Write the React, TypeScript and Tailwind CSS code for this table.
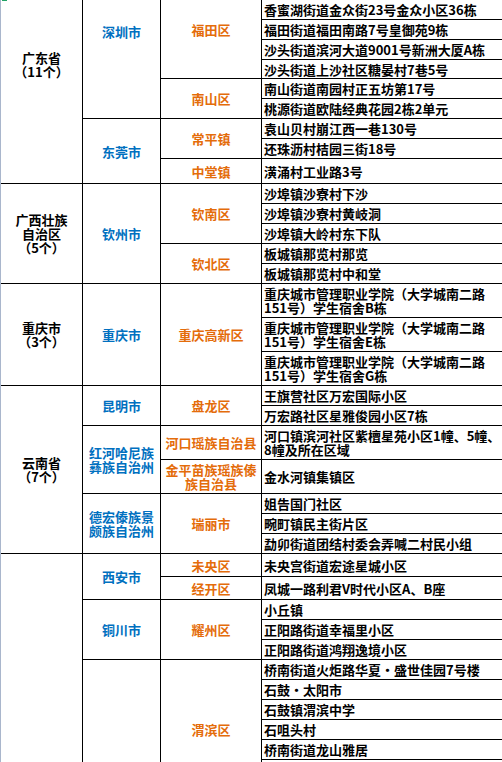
type Addr = { h: string; t: string[] };
type District = { name: string[]; rows: Addr[] };
type City = { name: string[]; districts: District[] };
type Province = { name: string[]; cities: City[] };

// rows above the top edge are cut off in the screenshot, kept so the merged cells centre the same way
const provinces: Province[] = [
  {
    name: ['广东省', '（11个）'],
    cities: [
      {
        name: ['深圳市'],
        districts: [
          { name: [], rows: [{ h: 'h-[35px]', t: [] }] },
          {
            name: ['福田区'],
            rows: [
              { h: 'h-[20px]', t: [] },
              { h: 'h-[20px]', t: ['香蜜湖街道金众街23号金众小区36栋'] },
              { h: 'h-[20px]', t: ['福田街道福田南路7号皇御苑9栋'] },
              { h: 'h-[20px]', t: ['沙头街道滨河大道9001号新洲大厦A栋'] },
              { h: 'h-[19px]', t: ['沙头街道上沙社区糖晏村7巷5号'] },
            ],
          },
          {
            name: ['南山区'],
            rows: [
              { h: 'h-[20px]', t: ['南山街道南园村正五坊第17号'] },
              { h: 'h-[20px]', t: ['桃源街道欧陆经典花园2栋2单元'] },
            ],
          },
        ],
      },
      {
        name: ['东莞市'],
        districts: [
          {
            name: ['常平镇'],
            rows: [
              { h: 'h-[20px]', t: ['袁山贝村崩江西一巷130号'] },
              { h: 'h-[20px]', t: ['还珠沥村桔园三街18号'] },
            ],
          },
          { name: ['中堂镇'], rows: [{ h: 'h-[25px]', t: ['潢涌村工业路3号'] }] },
        ],
      },
    ],
  },
  {
    name: ['广西壮族', '自治区', '（5个）'],
    cities: [
      {
        name: ['钦州市'],
        districts: [
          {
            name: ['钦南区'],
            rows: [
              { h: 'h-[20px]', t: ['沙埠镇沙寮村下沙'] },
              { h: 'h-[20px]', t: ['沙埠镇沙寮村黄岐洞'] },
              { h: 'h-[20px]', t: ['沙埠镇大岭村东下队'] },
            ],
          },
          {
            name: ['钦北区'],
            rows: [
              { h: 'h-[20px]', t: ['板城镇那览村那览'] },
              { h: 'h-[20px]', t: ['板城镇那览村中和堂'] },
            ],
          },
        ],
      },
    ],
  },
  {
    name: ['重庆市', '（3个）'],
    cities: [
      {
        name: ['重庆市'],
        districts: [
          {
            name: ['重庆高新区'],
            rows: [
              { h: 'h-[34px]', t: ['重庆城市管理职业学院（大学城南二路', '151号）学生宿舍B栋'] },
              { h: 'h-[34px]', t: ['重庆城市管理职业学院（大学城南二路', '151号）学生宿舍E栋'] },
              { h: 'h-[34px]', t: ['重庆城市管理职业学院（大学城南二路', '151号）学生宿舍G栋'] },
            ],
          },
        ],
      },
    ],
  },
  {
    name: ['云南省', '（7个）'],
    cities: [
      {
        name: ['昆明市'],
        districts: [
          {
            name: ['盘龙区'],
            rows: [
              { h: 'h-[20px]', t: ['王旗营社区万宏国际小区'] },
              { h: 'h-[20px]', t: ['万宏路社区星雅俊园小区7栋'] },
            ],
          },
        ],
      },
      {
        name: ['红河哈尼族', '彝族自治州'],
        districts: [
          {
            name: ['河口瑶族自治县'],
            rows: [{ h: 'h-[34px]', t: ['河口镇滨河社区紫檀星苑小区1幢、5幢、', '8幢及所在区域'] }],
          },
          {
            name: ['金平苗族瑶族傣', '族自治县'],
            rows: [{ h: 'h-[34px]', t: ['金水河镇集镇区'] }],
          },
        ],
      },
      {
        name: ['德宏傣族景', '颇族自治州'],
        districts: [
          {
            name: ['瑞丽市'],
            rows: [
              { h: 'h-[20px]', t: ['姐告国门社区'] },
              { h: 'h-[20px]', t: ['畹町镇民主街片区'] },
              { h: 'h-[20px]', t: ['勐卯街道团结村委会弄喊二村民小组'] },
            ],
          },
        ],
      },
    ],
  },
  {
    name: [],
    cities: [
      {
        name: ['西安市'],
        districts: [
          { name: ['未央区'], rows: [{ h: 'h-[23px]', t: ['未央宫街道宏途星城小区'] }] },
          { name: ['经开区'], rows: [{ h: 'h-[23px]', t: ['凤城一路利君V时代小区A、B座'] }] },
        ],
      },
      {
        name: ['铜川市'],
        districts: [
          {
            name: ['耀州区'],
            rows: [
              { h: 'h-[20px]', t: ['小丘镇'] },
              { h: 'h-[20px]', t: ['正阳路街道幸福里小区'] },
              { h: 'h-[20px]', t: ['正阳路街道鸿翔逸境小区'] },
            ],
          },
        ],
      },
      {
        name: [],
        districts: [
          {
            name: ['渭滨区'],
            rows: [
              { h: 'h-[20px]', t: ['桥南街道火炬路华夏・盛世佳园7号楼'] },
              { h: 'h-[20px]', t: ['石鼓・太阳市'] },
              { h: 'h-[20px]', t: ['石鼓镇渭滨中学'] },
              { h: 'h-[20px]', t: ['石咀头村'] },
              { h: 'h-[20px]', t: ['桥南街道龙山雅居'] },
              { h: 'h-[20px]', t: [] },
              { h: 'h-[20px]', t: [] },
            ],
          },
        ],
      },
    ],
  },
];

function Lines({ lines }: { lines: string[] }) {
  return (
    <>
      {lines.map((l, i) => (
        <div key={i}>{l}</div>
      ))}
    </>
  );
}

export default function App() {
  return (
    <div className="relative flex w-[502px] h-[762px] overflow-hidden bg-white font-['Noto_Sans_CJK_SC',sans-serif] text-[13px] font-bold leading-[14px] text-black">
      <div className="w-px shrink-0 self-stretch bg-[#a9b6cc]" />
      <div className="absolute left-[2px] top-0 w-[5px] h-px bg-[#21a366]" />

      <div className="flex-1 self-start -mt-[55px] flex flex-col">
        {provinces.map((p, pi) => (
          <div key={pi} className="flex">
            <div className="w-[82px] shrink-0 flex flex-col items-center justify-center pt-px border-r border-b border-black text-center whitespace-nowrap">
              <Lines lines={p.name} />
            </div>
            <div className="flex-1 flex flex-col">
              {p.cities.map((c, ci) => (
                <div key={ci} className="flex">
                  <div className="w-[78px] shrink-0 flex flex-col items-center justify-center pt-px border-r border-b border-black text-center whitespace-nowrap text-[#0070c0]">
                    <Lines lines={c.name} />
                  </div>
                  <div className="flex-1 flex flex-col">
                    {c.districts.map((d, di) => (
                      <div key={di} className="flex">
                        <div className="w-[101px] shrink-0 flex flex-col items-center justify-center pt-px border-r border-b border-black text-center whitespace-nowrap text-[#e46c0a]">
                          <Lines lines={d.name} />
                        </div>
                        <div className="flex-1 flex flex-col">
                          {d.rows.map((a, ai) => (
                            <div
                              key={ai}
                              className={`${a.h} flex flex-col justify-center pl-[2px] pt-px border-b border-black whitespace-nowrap`}
                            >
                              <Lines lines={a.t} />
                            </div>
                          ))}
                        </div>
                      </div>
                    ))}
                  </div>
                </div>
              ))}
            </div>
          </div>
        ))}
      </div>
    </div>
  );
}
